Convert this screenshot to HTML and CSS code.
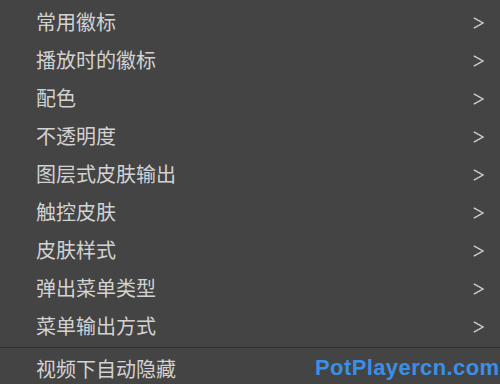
FILE: index.html
```html
<!DOCTYPE html>
<html lang="zh">
<head>
<meta charset="utf-8">
<title>菜单</title>
<link rel="stylesheet" href="styles.css">
</head>
<body>
<div class="menu">
  <div class="item"><span class="label">常用徽标</span><svg class="chev" viewBox="0 0 11 12"><polyline points="0.8,0.8 10,6 0.8,11.2"/></svg></div>
  <div class="item"><span class="label">播放时的徽标</span><svg class="chev" viewBox="0 0 11 12"><polyline points="0.8,0.8 10,6 0.8,11.2"/></svg></div>
  <div class="item"><span class="label">配色</span><svg class="chev" viewBox="0 0 11 12"><polyline points="0.8,0.8 10,6 0.8,11.2"/></svg></div>
  <div class="item"><span class="label">不透明度</span><svg class="chev" viewBox="0 0 11 12"><polyline points="0.8,0.8 10,6 0.8,11.2"/></svg></div>
  <div class="item"><span class="label">图层式皮肤输出</span><svg class="chev" viewBox="0 0 11 12"><polyline points="0.8,0.8 10,6 0.8,11.2"/></svg></div>
  <div class="item"><span class="label">触控皮肤</span><svg class="chev" viewBox="0 0 11 12"><polyline points="0.8,0.8 10,6 0.8,11.2"/></svg></div>
  <div class="item"><span class="label">皮肤样式</span><svg class="chev" viewBox="0 0 11 12"><polyline points="0.8,0.8 10,6 0.8,11.2"/></svg></div>
  <div class="item"><span class="label">弹出菜单类型</span><svg class="chev" viewBox="0 0 11 12"><polyline points="0.8,0.8 10,6 0.8,11.2"/></svg></div>
  <div class="item"><span class="label">菜单输出方式</span><svg class="chev" viewBox="0 0 11 12"><polyline points="0.8,0.8 10,6 0.8,11.2"/></svg></div>
  <div class="sep"></div>
  <div class="item"><span class="label">视频下自动隐藏</span></div>
</div>
<div class="watermark">PotPlayercn.com</div>
</body>
</html>
```
FILE: styles.css
```css
html, body {
  margin: 0;
  padding: 0;
  background: #444444;
  width: 500px;
  height: 384px;
  overflow: hidden;
}
body {
  position: relative;
  font-family: "Noto Sans CJK SC", "Noto Sans", sans-serif;
}
.menu {
  display: flex;
  flex-direction: column;
  padding-top: 3px;
}
.item {
  height: 38px;
  display: flex;
  align-items: center;
  justify-content: space-between;
  padding: 0 16px 0 36px;
}
.label {
  color: #d2d2d2;
  font-size: 20px;
  line-height: 38px;
}
.chev {
  width: 11px;
  height: 12px;
  fill: none;
  stroke: #cfcfcf;
  stroke-width: 1.4;
  margin-top: 2px;
}
.sep {
  height: 1px;
  background: #2e2e2e;
  margin: 2px 0 2px;
}
.watermark {
  position: absolute;
  left: 315px;
  top: 354px;
  font-family: "Liberation Sans", Arial, sans-serif;
  font-weight: bold;
  font-size: 22px;
  letter-spacing: 0.4px;
  color: #3a8fe8;
  line-height: 28px;
}
```
